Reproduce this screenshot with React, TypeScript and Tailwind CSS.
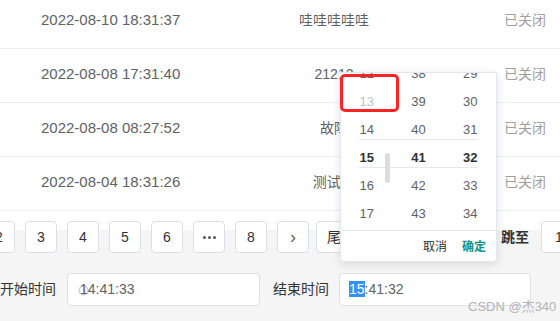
const rows = [
  { time: '2022-08-10 18:31:37', name: '哇哇哇哇哇', status: '已关闭' },
  { time: '2022-08-08 17:31:40', name: '21212', status: '已关闭' },
  { time: '2022-08-08 08:27:52', name: '故障', status: '已关闭' },
  { time: '2022-08-04 18:31:26', name: '测试11', status: '已关闭' },
];

const pages = ['2', '3', '4', '5', '6', '...', '8', '›'];

const hours = ['12', '13', '14', '15', '16', '17'];
const minutes = ['38', '39', '40', '41', '42', '43'];
const seconds = ['29', '30', '31', '32', '33', '34'];

function ClockIcon({ className }: { className?: string }) {
  return (
    <svg className={className} viewBox="0 0 12 12" fill="none" stroke="currentColor" strokeWidth={1.2}>
      <circle cx="6" cy="6" r="4.8" />
      <path d="M6 3.4V6.2L7.6 7.4" strokeLinecap="round" />
    </svg>
  );
}

function PickerColumn({ items, active }: { items: string[]; active: number }) {
  return (
    <div className="flex w-[52px] flex-col items-center">
      {items.map((v, i) => (
        <div
          key={v}
          className={
            'flex h-[28px] items-center text-[13px] ' +
            (i === active ? 'font-bold text-[#303133]' : v === '13' ? 'text-[#c0c4cc]' : 'text-[#606266]')
          }
        >
          {v}
        </div>
      ))}
    </div>
  );
}

export default function App() {
  return (
    <div
      className="relative h-[321px] w-[560px] overflow-hidden bg-[#f5f5f5]"
      style={{ fontFamily: '"Liberation Sans", "Noto Sans CJK SC", sans-serif' }}
    >
      {/* table rows */}
      <div className="-mt-[5px] bg-white">
        {rows.map(r => (
          <div key={r.time} className="flex h-[54px] items-center border-b border-[#ebeef5] pb-[3px] text-[14px]">
            <div className="w-[268px] pl-[41px] text-[15px] text-[#606266]">{r.time}</div>
            <div className="w-[132px] text-center text-[#606266]">{r.name}</div>
            <div className="ml-[104px] text-[#a0a0a0]">{r.status}</div>
          </div>
        ))}
      </div>

      {/* pagination */}
      <div className="flex h-[52px] items-start whitespace-nowrap bg-[linear-gradient(to_bottom,#ffffff_19px,#f5f5f5_19px)] pt-[10px] text-[14px] text-[#333]">
        <div className="-ml-[17px] flex shrink-0 gap-[10px]">
          {pages.map(p => (
            <div
              key={p}
              className={
                'flex h-[32px] w-[32px] items-center justify-center rounded-[4px] border border-[#dcdfe6] bg-white ' +
                (p === '›' ? 'text-[18px] text-[#666]' : '')
              }
            >
              {p === '...' ? (
                <span className="flex gap-[2px]">
                  <span className="h-[3px] w-[3px] rounded-full bg-[#555]" />
                  <span className="h-[3px] w-[3px] rounded-full bg-[#555]" />
                  <span className="h-[3px] w-[3px] rounded-full bg-[#555]" />
                </span>
              ) : (
                p
              )}
            </div>
          ))}
        </div>
        <div className="ml-[7px] flex h-[32px] w-[60px] shrink-0 items-center rounded-[4px] border border-[#dcdfe6] bg-white pl-[10px]">尾页</div>
        <div className="ml-[125px] flex h-[32px] shrink-0 items-center font-bold text-[#333]">跳至</div>
        <div className="ml-[12px] flex h-[32px] w-[50px] shrink-0 items-center rounded-[4px] border border-[#dcdfe6] bg-white pl-[13px]">1</div>
      </div>

      {/* time range */}
      <div className="mt-[10px] flex h-[33px] items-center text-[14px] text-[#333]">
        <span className="w-[67px]">开始时间</span>
        <div className="relative flex h-[33px] w-[193px] items-center rounded-[4px] border border-[#dcdfe6] bg-white pl-[12px] text-[#606266]">
          <ClockIcon className="absolute left-[10px] top-[11px] h-[11px] w-[11px] text-[#c6c6c6]" />
          <span className="relative">14:41:33</span>
        </div>
        <span className="ml-[13px] w-[66px]">结束时间</span>
        <div className="relative flex h-[33px] w-[192px] items-center rounded-[4px] border border-[#dcdfe6] bg-white pl-[9px] text-[#606266]">
          <ClockIcon className="absolute left-[9px] top-[11px] h-[11px] w-[11px] text-[#c6c6c6]" />
          <span className="relative">
            <span className="bg-[#3390ff] text-white">15</span>:41:32
          </span>
        </div>
      </div>

      {/* time picker dropdown */}
      <div className="absolute left-[340px] top-[72px] h-[190px] w-[157px] rounded-b-[4px] border border-[#e4e7ed] bg-white shadow-[0_2px_10px_rgba(0,0,0,0.12)]">
        <div className="relative h-[158px] overflow-hidden border-b border-[#e4e7ed]">
          <div className="-mt-[13px] flex">
            <PickerColumn items={hours} active={3} />
            <PickerColumn items={minutes} active={3} />
            <PickerColumn items={seconds} active={3} />
          </div>
          <div className="absolute left-[18px] top-[66px] h-px w-[119px] bg-[#e4e7ed]" />
          <div className="absolute left-[18px] top-[94px] h-px w-[119px] bg-[#e4e7ed]" />
          <div className="absolute left-[44px] top-[80px] h-[30px] w-[5px] rounded-full bg-[#dcdcdc]" />
        </div>
        <div className="flex h-[31px] items-center justify-end gap-[15px] pr-[10px] text-[12px]">
          <span className="text-[#303133]">取消</span>
          <span className="font-bold text-[#14928a]">确定</span>
        </div>
      </div>

      {/* annotation */}
      <div className="absolute left-[340px] top-[74px] h-[38px] w-[59px] rounded-[5px] border-[3px] border-[#ff2424]" />

      <div className="absolute left-[468px] top-[297px] text-[13px] text-[#b3b3b3]">CSDN @杰340</div>
    </div>
  );
}
